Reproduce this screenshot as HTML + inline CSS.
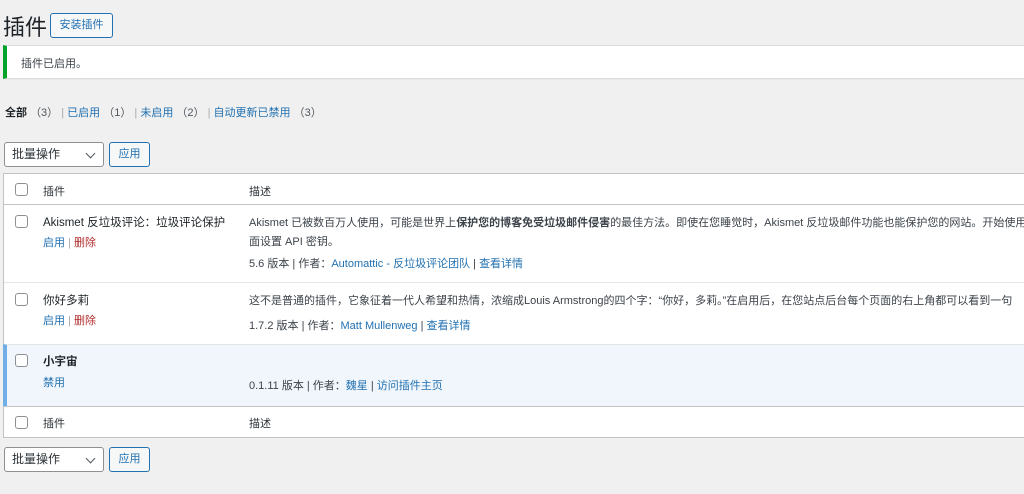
<!DOCTYPE html>
<html><head><meta charset="utf-8"><style>
*{box-sizing:border-box;margin:0;padding:0}
body{width:1024px;height:494px;overflow:hidden;background:#f0f0f1;font-family:"Liberation Sans","Noto Sans CJK SC",sans-serif;font-size:11px;color:#3c434a;position:relative}
.a{position:absolute;white-space:nowrap}
a{color:#2271b1;text-decoration:none}
.btn{position:absolute;border:1px solid #2271b1;border-radius:3px;background:#f6f7f7;color:#2271b1;text-align:center;font-size:11px}
.sel{position:absolute;border:1px solid #8c8f94;border-radius:3px;background:#fff;color:#2c3338;font-size:12px;padding-left:7px}
.sel:after{content:"";position:absolute;right:9px;top:7px;width:6px;height:6px;border-right:1.5px solid #50575e;border-bottom:1.5px solid #50575e;transform:rotate(45deg)}
.cb{position:absolute;left:15px;width:13px;height:13px;border:1px solid #8c8f94;border-radius:3px;background:#fff}
.row{position:absolute;left:4px;width:1030px;background:#fff;border-top:1px solid #e5e5e5}
.del{color:#b32d2e}
.g{color:#a7aaad}
</style></head><body>
<div class="a" style="left:3px;top:10px;font-size:22px;color:#1d2327">插件</div>
<div class="btn" style="left:50px;top:13px;width:63px;height:25px;line-height:23px">安装插件</div>
<div class="a" style="left:3px;top:45px;width:1030px;height:34px;background:#fff;border-left:4px solid #00a32a;border-top:1px solid #dcdcde;border-bottom:1px solid #dcdcde;box-shadow:0 1px 1px rgba(0,0,0,.04)"><span style="position:absolute;left:14px;top:9px;color:#3c434a">插件已启用。</span></div>
<div class="a" style="left:5px;top:104px"><b style="color:#1d2327">全部</b> <span style="color:#50575e">（3）</span> <span class="g">|</span> <a>已启用</a> <span style="color:#50575e">（1）</span> <span class="g">|</span> <a>未启用</a> <span style="color:#50575e">（2）</span> <span class="g">|</span> <a>自动更新已禁用</a> <span style="color:#50575e">（3）</span></div>
<div class="sel" style="left:4px;top:142px;width:100px;height:25px;line-height:23px">批量操作</div>
<div class="btn" style="left:109px;top:142px;width:41px;height:25px;line-height:23px">应用</div>
<div style="position:absolute;left:3px;top:173px;width:1030px;height:265px;border:1px solid #c3c4c7;background:#fff"></div>
<div class="a" style="left:4px;top:174px;width:1030px;height:31px;border-bottom:1px solid #c3c4c7;background:#fff"></div>
<div class="cb" style="top:183px"></div>
<div class="a" style="left:43px;top:183px;color:#2c3338">插件</div>
<div class="a" style="left:249px;top:183px;color:#2c3338">描述</div>

<div class="row" style="top:205px;height:77px;border-top:none"></div>
<div class="cb" style="top:215px"></div>
<div class="a" style="left:43px;top:214px;color:#1d2327;font-size:11.5px">Akismet 反垃圾评论：垃圾评论保护</div>
<div class="a" style="left:43px;top:234px"><a>启用</a> <span class="g">|</span> <span class="del">删除</span></div>
<div class="a" style="left:249px;top:214px;color:#3c434a">Akismet 已被数百万人使用，可能是世界上<b>保护您的博客免受垃圾邮件侵害</b>的最佳方法。即使在您睡觉时，Akismet 反垃圾邮件功能也能保护您的网站。开始使用：启用</div>
<div class="a" style="left:249px;top:233px">面设置 API 密钥。</div>
<div class="a" style="left:249px;top:255px">5.6 版本 | 作者：<a>Automattic - 反垃圾评论团队</a> | <a>查看详情</a></div>

<div class="row" style="top:282px;height:62px"></div>
<div class="cb" style="top:293px"></div>
<div class="a" style="left:43px;top:292px;color:#1d2327;font-size:11.5px">你好多莉</div>
<div class="a" style="left:43px;top:312px"><a>启用</a> <span class="g">|</span> <span class="del">删除</span></div>
<div class="a" style="left:249px;top:292px">这不是普通的插件，它象征着一代人希望和热情，浓缩成Louis Armstrong的四个字：“你好，多莉。”在启用后，在您站点后台每个页面的右上角都可以看到一句</div>
<div class="a" style="left:249px;top:317px">1.7.2 版本 | 作者：<a>Matt Mullenweg</a> | <a>查看详情</a></div>

<div class="row" style="top:344px;height:62px;background:#f0f6fc;border-left:4px solid #72aee6;left:3px"></div>
<div class="cb" style="top:354px"></div>
<div class="a" style="left:43px;top:353px;color:#1d2327;font-weight:bold;font-size:11.5px">小宇宙</div>
<div class="a" style="left:43px;top:374px"><a>禁用</a></div>
<div class="a" style="left:249px;top:377px">0.1.11 版本 | 作者：<a>魏星</a> | <a>访问插件主页</a></div>

<div class="a" style="left:4px;top:406px;width:1030px;height:31px;border-top:1px solid #c3c4c7;background:#fff"></div>
<div class="cb" style="top:416px"></div>
<div class="a" style="left:43px;top:415px;color:#2c3338">插件</div>
<div class="a" style="left:249px;top:415px;color:#2c3338">描述</div>

<div class="sel" style="left:4px;top:447px;width:100px;height:25px;line-height:23px">批量操作</div>
<div class="btn" style="left:109px;top:447px;width:41px;height:25px;line-height:23px">应用</div>
</body></html>
